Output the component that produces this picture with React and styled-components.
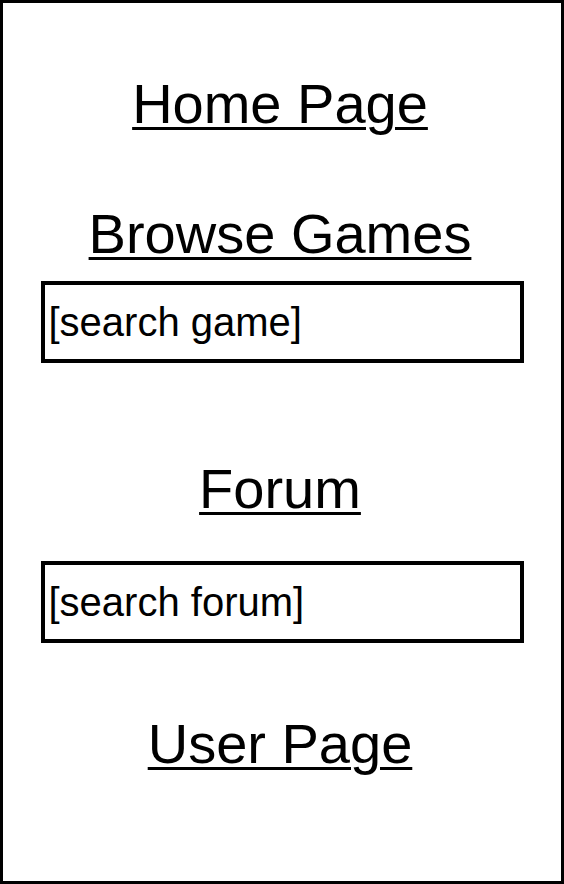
import React from "react";
import styled, { createGlobalStyle } from "styled-components";

const GlobalStyle = createGlobalStyle`
  html, body {
    margin: 0;
    padding: 0;
    background: #fff;
  }
  body {
    font-family: "Liberation Sans", Arial, sans-serif;
    color: #000;
  }
`;

const Frame = styled.div`
  box-sizing: border-box;
  width: 564px;
  height: 884px;
  border: 3px solid #000;
  display: flex;
  flex-direction: column;
  align-items: center;
  padding-top: 73px;
`;

const NavLink = styled.a`
  display: block;
  margin-top: ${(p) => p.$top || 0}px;
  margin-right: 4px;
  font-size: 56px;
  line-height: 56px;
  color: #000;
  text-decoration: underline;
  text-decoration-thickness: 3px;
  text-underline-offset: 4px;
  cursor: pointer;
`;

const SearchBox = styled.div`
  box-sizing: border-box;
  width: 483px;
  height: 82px;
  margin-top: ${(p) => p.$top || 0}px;
  border: 4px solid #000;
  display: flex;
  align-items: center;
  padding-left: 4px;
  font-size: 40px;
  line-height: 40px;
`;

const App = () => {
  return (
    <>
      <GlobalStyle />
      <Frame>
        <NavLink>Home Page</NavLink>
        <NavLink $top={74}>Browse Games</NavLink>
        <SearchBox $top={19}>[search game]</SearchBox>
        <NavLink $top={98}>Forum</NavLink>
        <SearchBox $top={44}>[search forum]</SearchBox>
        <NavLink $top={73}>User Page</NavLink>
      </Frame>
    </>
  );
};

export default App;
